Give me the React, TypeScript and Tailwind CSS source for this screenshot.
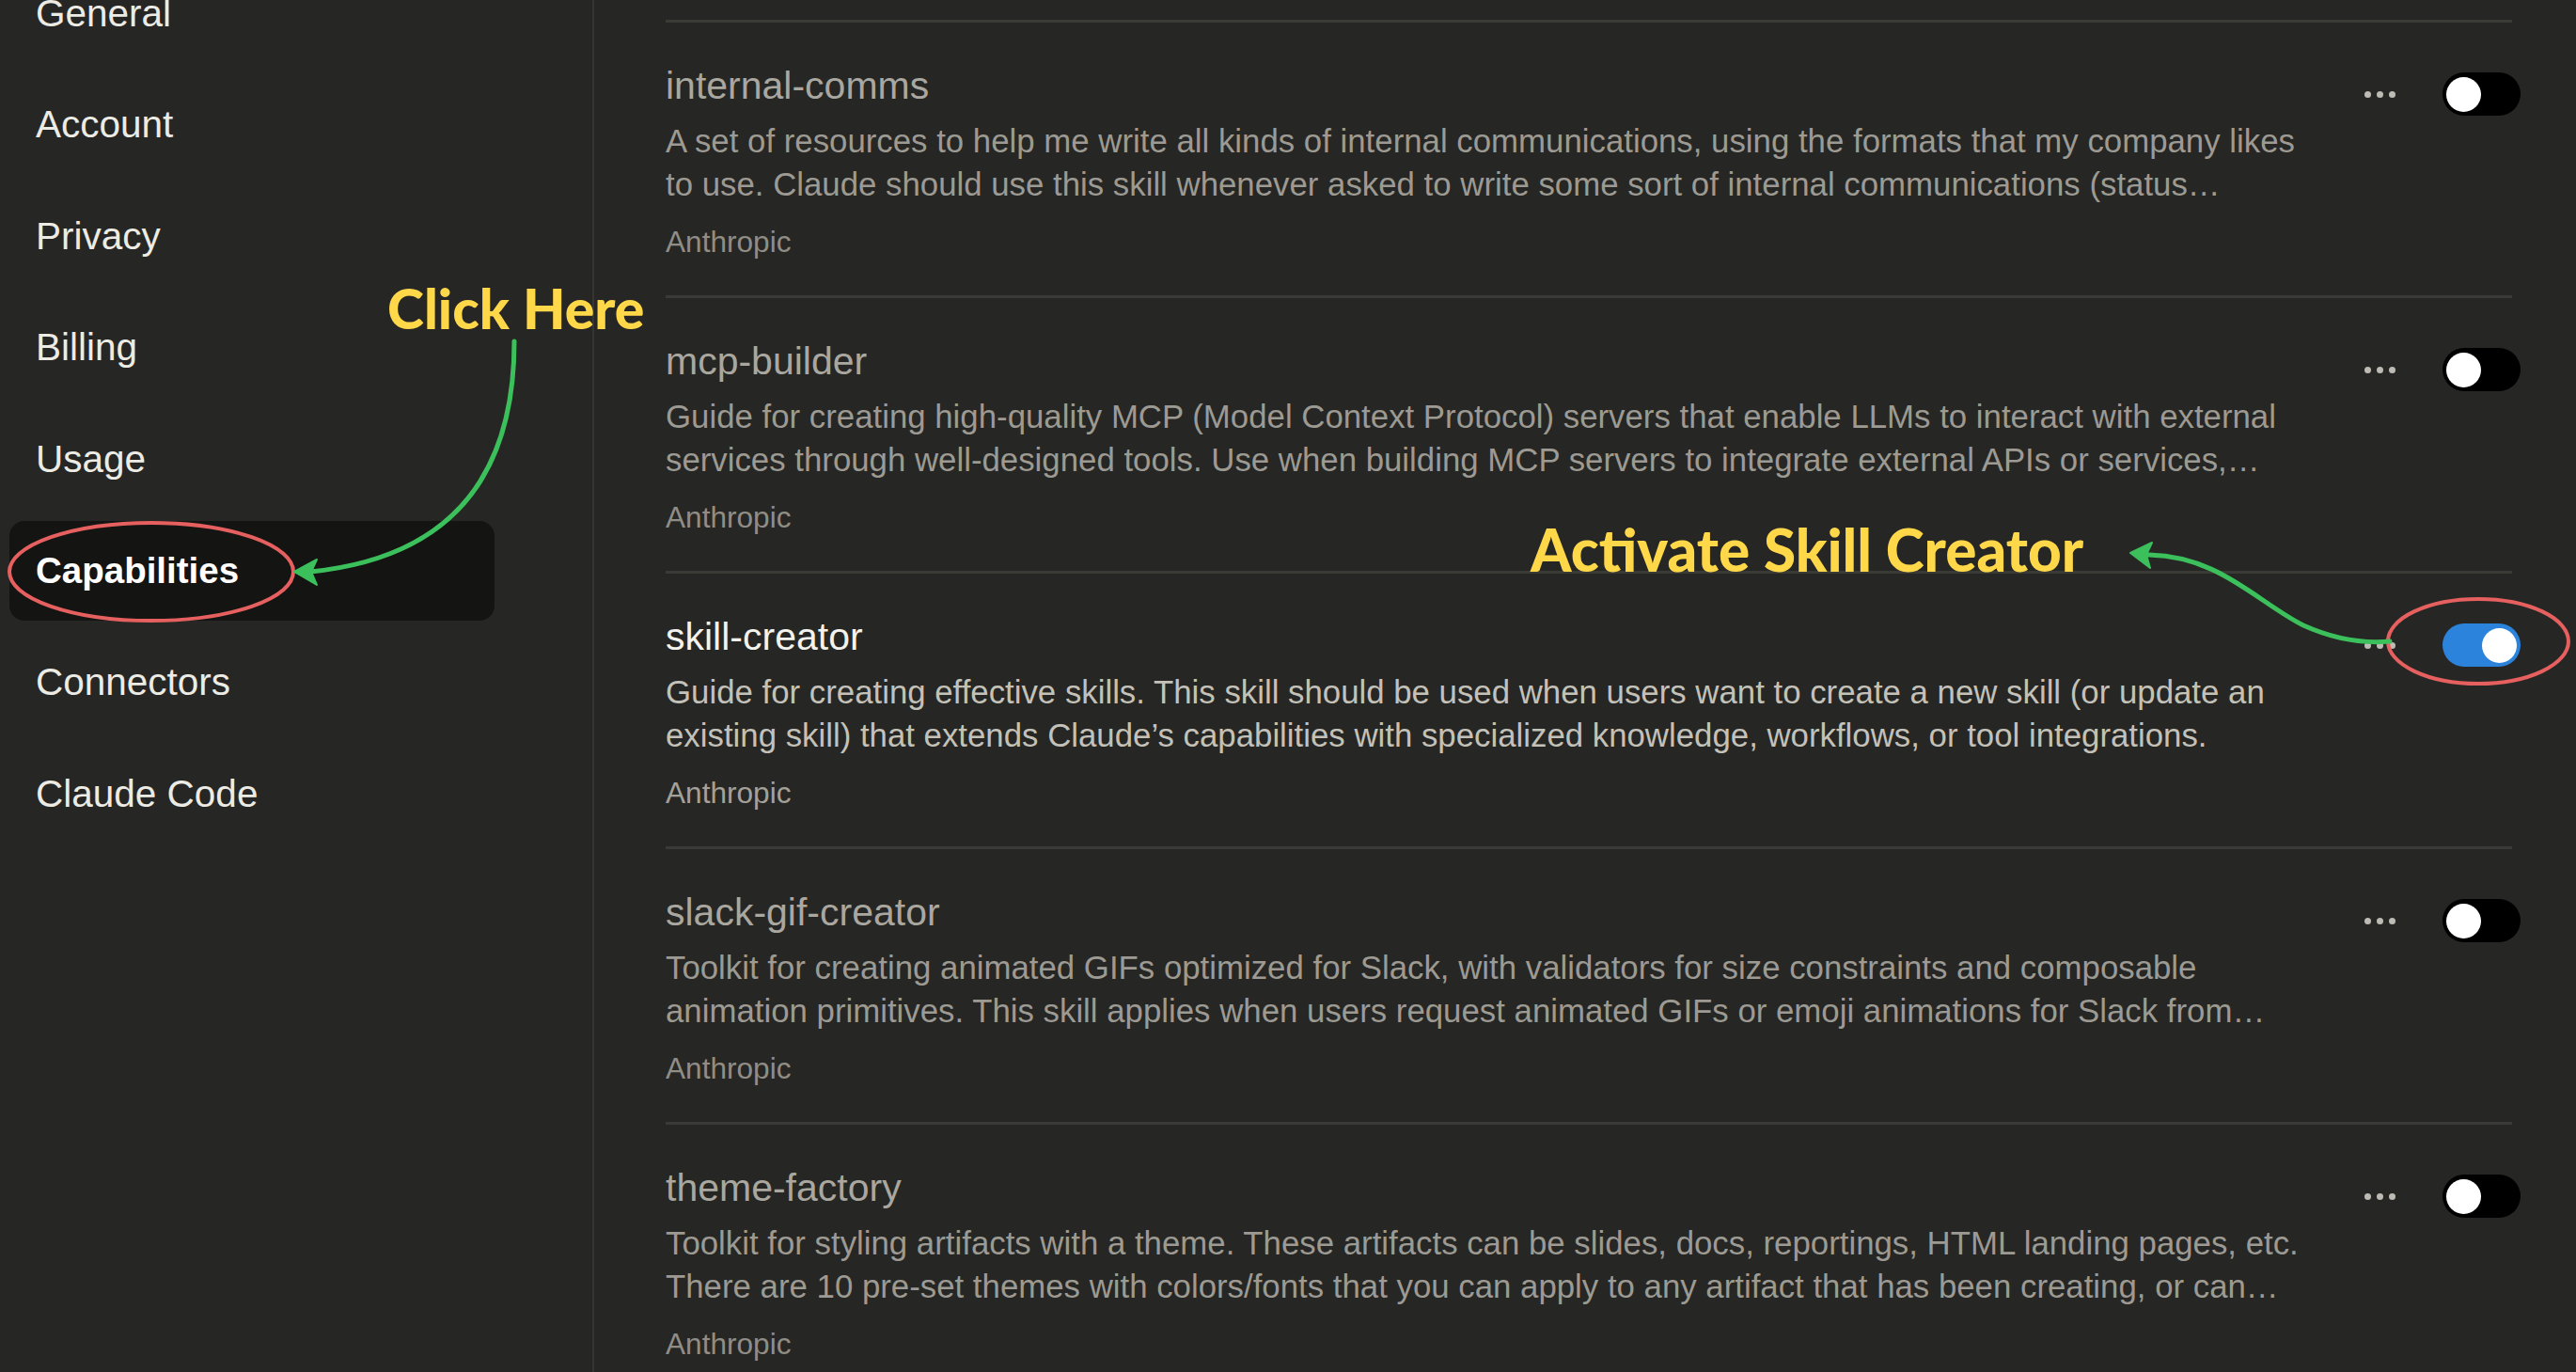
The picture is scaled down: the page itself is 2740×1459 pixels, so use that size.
import clsx from "clsx";

const navItems = ["General", "Account", "Privacy", "Billing", "Usage", "Capabilities", "Connectors", "Claude Code"];

const skills = [
    {
        name: "internal-comms",
        lines: [
            "A set of resources to help me write all kinds of internal communications, using the formats that my company likes",
            "to use. Claude should use this skill whenever asked to write some sort of internal communications (status…",
        ],
        on: false,
    },
    {
        name: "mcp-builder",
        lines: [
            "Guide for creating high-quality MCP (Model Context Protocol) servers that enable LLMs to interact with external",
            "services through well-designed tools. Use when building MCP servers to integrate external APIs or services,…",
        ],
        on: false,
    },
    {
        name: "skill-creator",
        lines: [
            "Guide for creating effective skills. This skill should be used when users want to create a new skill (or update an",
            "existing skill) that extends Claude’s capabilities with specialized knowledge, workflows, or tool integrations.",
        ],
        on: true,
    },
    {
        name: "slack-gif-creator",
        lines: [
            "Toolkit for creating animated GIFs optimized for Slack, with validators for size constraints and composable",
            "animation primitives. This skill applies when users request animated GIFs or emoji animations for Slack from…",
        ],
        on: false,
    },
    {
        name: "theme-factory",
        lines: [
            "Toolkit for styling artifacts with a theme. These artifacts can be slides, docs, reportings, HTML landing pages, etc.",
            "There are 10 pre-set themes with colors/fonts that you can apply to any artifact that has been creating, or can…",
        ],
        on: false,
    },
];

function Toggle({ on }: { on: boolean }) {
    return (
        <div
            className={clsx(
                "flex h-[46px] w-[83px] items-center rounded-full px-[4px]",
                on ? "justify-end bg-[#2c83db]" : "justify-start bg-black"
            )}
        >
            <div className="h-[37px] w-[37px] rounded-full bg-white" />
        </div>
    );
}

function SkillRow({ skill }: { skill: (typeof skills)[number] }) {
    return (
        <div className="flex h-[293px] items-start justify-between border-t-[3px] border-[#3a3a37]">
            <div className="pt-[43px]">
                <div
                    className={clsx(
                        "text-[41px] leading-[48px] font-medium",
                        skill.on ? "text-[#f3f2ec]" : "text-[#a9a79f]"
                    )}
                >
                    {skill.name}
                </div>
                <div
                    className={clsx(
                        "mt-[12px] text-[34.8px] leading-[46px]",
                        skill.on ? "text-[#c3c1b8]" : "text-[#9c9a92]"
                    )}
                >
                    {skill.lines.map((l) => (
                        <div key={l} className="whitespace-nowrap">{l}</div>
                    ))}
                </div>
                <div className={clsx("mt-[18px] text-[31.6px] leading-[40px]", skill.on ? "text-[#a3a19a]" : "text-[#8f8d86]")}>
                    Anthropic
                </div>
            </div>

            {/* menu + switch */}
            <div className="-mr-[9px] mt-[53px] flex items-center gap-[50px]">
                <div className="flex gap-[6px]">
                    <div className="h-[7px] w-[7px] rounded-full bg-[#bdbbb3]" />
                    <div className="h-[7px] w-[7px] rounded-full bg-[#bdbbb3]" />
                    <div className="h-[7px] w-[7px] rounded-full bg-[#bdbbb3]" />
                </div>
                <Toggle on={skill.on} />
            </div>
        </div>
    );
}

export default function App() {
    return (
        <div
            className="relative flex h-[1459px] w-[2740px] overflow-hidden bg-[#262624]"
            style={{ fontFamily: '"Liberation Sans", Arial, sans-serif' }}
        >
            {/* Sidebar */}
            <div className="w-[632px] shrink-0 border-r-2 border-[#353532]">
                <div className="-mt-[39px] ml-[10px] flex w-[516px] flex-col gap-[12.6px]">
                    {navItems.map((item) => {
                        const active = item === "Capabilities";
                        return (
                            <div
                                key={item}
                                className={clsx(
                                    "flex h-[106px] items-center rounded-[16px] px-[28px]",
                                    active ? "bg-[#141413] text-[38.5px] font-semibold text-white" : "text-[40.5px] text-[#ecebe4]"
                                )}
                            >
                                {item}
                            </div>
                        );
                    })}
                </div>
            </div>

            {/* Skills list */}
            <div className="flex-1 pl-[76px] pr-[68px] pt-[21px]">
                {skills.map((s) => (
                    <SkillRow key={s.name} skill={s} />
                ))}
            </div>

            {/* annotations */}
            <svg
                className="pointer-events-none absolute left-0 top-0"
                width="2740"
                height="1459"
                viewBox="0 0 2740 1459"
                fill="none"
            >
                <ellipse cx="161" cy="608" rx="151" ry="52" stroke="#e5605f" strokeWidth="4" />
                <path d="M547 363 C 547 470, 510 590, 330 608" stroke="#3cc05c" strokeWidth="5" strokeLinecap="round" />
                <path d="M313 608 L337 595 L331 608 L337 622 Z" fill="#3cc05c" stroke="#3cc05c" strokeWidth="2" strokeLinejoin="round" />

                <ellipse cx="2636" cy="682" rx="96" ry="45" stroke="#e5605f" strokeWidth="4" />
                <path
                    d="M2282 590 C 2360 590, 2400 640, 2450 665 C 2490 683, 2520 684, 2542 682"
                    stroke="#3cc05c"
                    strokeWidth="5"
                    strokeLinecap="round"
                />
                <path d="M2266 588 L2289 577 L2283 590 L2287 604 Z" fill="#3cc05c" stroke="#3cc05c" strokeWidth="2" strokeLinejoin="round" />
            </svg>

            <div
                className="absolute left-[412px] top-[298px] text-[59px] leading-none font-black text-[#ffd84a]"
                style={{ fontFamily: "Lato, sans-serif" }}
            >
                Click Here
            </div>
            <div
                className="absolute left-[1628px] top-[553px] text-[62px] leading-none font-black text-[#ffd84a]"
                style={{ fontFamily: "Lato, sans-serif" }}
            >
                Activate Skill Creator
            </div>
        </div>
    );
}
